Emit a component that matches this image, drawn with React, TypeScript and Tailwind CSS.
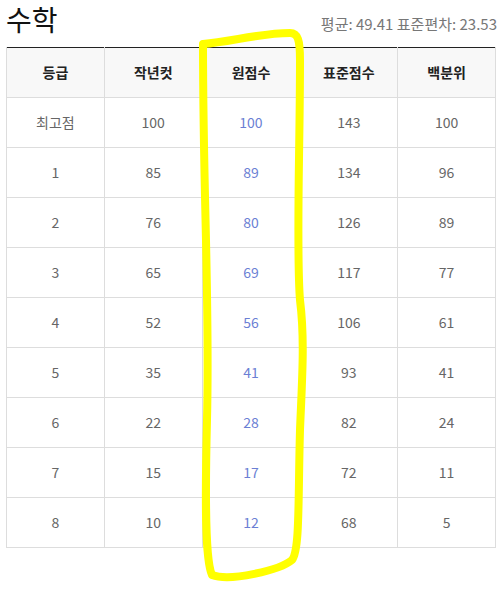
const rows = [
  ['최고점', '100', '100', '143', '100'],
  ['1', '85', '89', '134', '96'],
  ['2', '76', '80', '126', '89'],
  ['3', '65', '69', '117', '77'],
  ['4', '52', '56', '106', '61'],
  ['5', '35', '41', '93', '41'],
  ['6', '22', '28', '82', '24'],
  ['7', '15', '17', '72', '11'],
  ['8', '10', '12', '68', '5'],
]

const heads = ['등급', '작년컷', '원점수', '표준점수', '백분위']

export default function App() {
  return (
    <div
      className="relative min-h-[589px] bg-white px-[6px]"
      style={{ fontFamily: '"Noto Sans CJK KR", "Noto Sans", sans-serif' }}
    >
      <div className="flex h-[47px] w-[491px] items-end justify-between pb-[14px]">
        <h1 className="text-[28px] font-normal leading-none text-[#111]">수학</h1>
        <span className="mb-[2px] text-[15px] leading-none text-[#777]">평균: 49.41 표준편차: 23.53</span>
      </div>
      <table className="w-[490px] table-fixed border-collapse text-center text-[14px]">
        <thead>
          <tr className="border-t border-t-[#222] bg-[#f8f8f8]">
            {heads.map(h => (
              <th key={h} className="h-[50px] border-x border-b border-[#ddd] font-bold text-[#222]">
                {h}
              </th>
            ))}
          </tr>
        </thead>
        <tbody>
          {rows.map(r => (
            <tr key={r[0]}>
              {r.map((c, i) => (
                <td
                  key={i}
                  className={`h-[50px] border border-[#ddd] ${i === 2 ? 'text-[#6b7fd4]' : 'text-[#666]'}`}
                >
                  {c}
                </td>
              ))}
            </tr>
          ))}
        </tbody>
      </table>

      {/* highlighter mark over the raw score column */}
      <svg className="pointer-events-none absolute left-0 top-0" width="504" height="589">
        <path
          d="M203,44 C203,200 210,300 207,420 C205,500 205,560 212,575 C230,582 280,570 292,560 C300,550 298,500 300,430 C302,380 305,340 300,300 C296,250 300,150 300,60 C300,40 298,33 290,33 C260,33 230,42 203,44 Z"
          fill="none"
          stroke="#ffff00"
          strokeWidth="8"
          strokeLinejoin="round"
        />
      </svg>
    </div>
  )
}
